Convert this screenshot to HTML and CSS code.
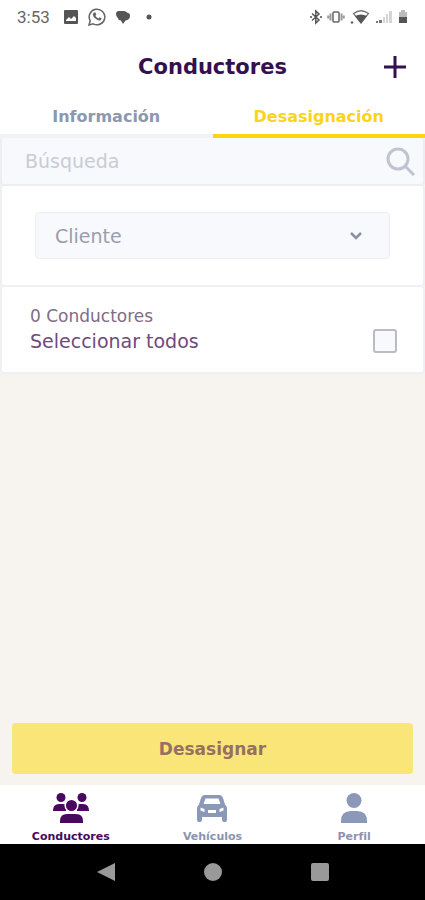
FILE: index.html
```html
<!DOCTYPE html>
<html lang="es">
<head>
<meta charset="utf-8">
<meta name="viewport" content="width=device-width, initial-scale=1">
<title>Conductores</title>
<link rel="stylesheet" href="styles.css">
</head>
<body>
<div class="status">
  <span class="clock">3:53</span>
  <div class="notices">
    <svg width="16" height="16" viewBox="0 0 16 16"><path fill="#555" fill-rule="evenodd" d="M2 1h12a1 1 0 0 1 1 1v12a1 1 0 0 1-1 1H2a1 1 0 0 1-1-1V2a1 1 0 0 1 1-1zM3 12h10V9l-2-2-3 3-2-2-3 3z"/></svg>
    <svg width="18" height="18" viewBox="0 0 18 18"><path fill="none" stroke="#666" stroke-width="1.5" d="M1 17l1.200-4.200A7.800 7.800 0 1 1 5.200 15.800z"/><path fill="#666" d="M6.200 4.500l1.300.1.800 2-.8 1.200c.8 1.400 1.600 2 2.900 2.600l1.100-1.200 2 1c0 1.600-1 2.400-2.200 2.400-3-.4-6.200-3.400-6.400-6 0-.9.600-1.700 1.300-2.100z"/></svg>
    <svg width="16" height="16" viewBox="0 0 16 16"><path fill="#555" d="M4 2h5q2 0 3 1.500 3 .5 3 3Q15 11 10.500 11.500L8 15l-2-3.500Q3 11 2.500 8.500 1 7 1 5q0-3 3-3z"/></svg>
    <svg class="dot" width="6" height="6" viewBox="0 0 6 6"><circle cx="3" cy="3" r="2.500" fill="#555"/></svg>
  </div>
  <div class="signals">
    <svg width="12" height="16" viewBox="0 0 12 16"><path fill="none" stroke="#555" stroke-width="1.500" d="M2 4.500l7 6.500-3.200 3V2L9 5 2 11.500"/><path fill="#777" d="M10 7h2v2h-2zM0 7h2v2H0z"/></svg>
    <svg width="18" height="16" viewBox="0 0 18 16"><rect x="6" y="3" width="6" height="10" rx="1" fill="none" stroke="#666" stroke-width="1.500"/><path stroke="#999" stroke-width="2" d="M3.500 4.500v7M14.500 4.500v7M1.200 6.500v3M16.800 6.500v3"/></svg>
    <svg width="20" height="16" viewBox="0 0 20 16"><circle cx="2" cy="13.500" r="1.300" fill="#666"/><path fill="none" stroke="#777" stroke-width="1.300" d="M11 14L3.500 4.500Q11-1 18.500 4.500z"/><path fill="#555" d="M11 14.500L5 7q6-3 12 0z"/></svg>
    <svg width="18" height="16" viewBox="0 0 18 16"><path fill="#777" d="M1 12h2v2H1zM4 11h3v3H4z"/><path fill="#d5d5d5" d="M8 8h2v6H8zM11 5h2v9h-2zM14 2h3v12h-3z"/></svg>
    <svg width="10" height="16" viewBox="0 0 10 16"><path fill="#bbb" d="M3 1h4v2h2v6H1V3h2z"/><path fill="#555" d="M1 8h8v6H1z"/></svg>
  </div>
</div>
<header class="top">
  <h1>Conductores</h1>
  <button class="add" aria-label="Añadir"><svg width="24" height="24" viewBox="0 0 24 24"><path stroke="#35104f" stroke-width="3" d="M12 1v22M1 12h22"/></svg></button>
</header>
<nav class="tabs">
  <a href="#info">Información</a>
  <a href="#des" class="on">Desasignación</a>
</nav>
<main>
  <form class="search">
    <input type="search" placeholder="Búsqueda" aria-label="Búsqueda">
    <button type="button" aria-label="Buscar"><svg width="30" height="30" viewBox="0 0 30 30"><g fill="none" stroke="#bfc4d0" stroke-width="3"><circle cx="13" cy="13" r="10"/><path d="M20 20l9 9"/></g></svg></button>
  </form>
  <section class="filter">
    <div class="pick">
      <select aria-label="Cliente"><option>Cliente</option></select>
      <svg width="14" height="10" viewBox="0 0 14 10"><path fill="none" stroke="#8b90a2" stroke-width="2.500" d="M2 2l5 5 5-5"/></svg>
    </div>
  </section>
  <section class="all">
    <div>
      <p class="count">0 Conductores</p>
      <label for="all">Seleccionar todos</label>
    </div>
    <input type="checkbox" id="all">
  </section>
</main>
<div class="action"><button>Desasignar</button></div>
<nav class="bottom">
  <a href="#c" class="on"><svg width="38" height="32" viewBox="0 0 38 32"><g fill="#4a0860"><circle cx="9" cy="5.500" r="4.500"/><circle cx="30" cy="5.500" r="4.500"/><path d="M1 19q0-7 6-7h4q3 0 3 3v4zM25 19v-4q0-3 3-3h3q6 0 6 7z"/><path d="M8 31v-2q0-7 7-7h9q7 0 7 7v2z"/><circle cx="19.500" cy="13.500" r="6.300" stroke="#fff" stroke-width="1.500"/></g></svg>Conductores</a>
  <a href="#v"><svg width="38" height="32" viewBox="0 0 38 32"><path fill="#8b98b8" fill-rule="evenodd" d="M12 3h14q3 0 4 3l2 6.500q2 1.500 2 4V28q0 2-2 2h-1q-2 0-2-2v-3H9v3q0 2-2 2H6q-2 0-2-2V16.500q0-2.500 2-4L8 6q1-3 4-3zm.500 3.500L10.500 12h17l-2-5.500zM7.500 15.500v3l4 1.500v-3zM30.500 15.500v3l-4 1.500v-3zM15 18v3h8v-3z"/></svg>Vehículos</a>
  <a href="#p"><svg width="38" height="32" viewBox="0 0 38 32"><g fill="#8b98b8"><circle cx="19" cy="8.500" r="7.500"/><path d="M6 31v-2q0-10 10-10h6q10 0 10 10v2z"/></g></svg>Perfil</a>
</nav>
<div class="system">
  <button aria-label="Atrás"><svg width="20" height="20" viewBox="0 0 20 20"><path fill="#999" d="M19 1v18L1 10z"/></svg></button>
  <button aria-label="Inicio"><svg width="20" height="20" viewBox="0 0 20 20"><circle cx="10" cy="10" r="9" fill="#999"/></svg></button>
  <button aria-label="Recientes"><svg width="20" height="20" viewBox="0 0 20 20"><rect x="1" y="1" width="18" height="18" rx="2" fill="#999"/></svg></button>
</div>
</body>
</html>
```
FILE: styles.css
```css
* { box-sizing: border-box; }
body { margin: 0; min-height: 100vh; display: flex; flex-direction: column; background: #f7f3ef; font-family: "DejaVu Sans", sans-serif; }
h1, p { margin: 0; }
button { border: 0; padding: 0; background: none; font: inherit; }
a { text-decoration: none; }
svg { display: block; }
.status { display: flex; align-items: center; height: 34px; padding: 0 17px; background: #fff; }
.clock { font: 17px Roboto, sans-serif; color: #666; }
.notices, .signals { display: flex; align-items: center; gap: 9px; margin-left: 13px; }
.dot { margin-left: 6px; }
.signals { gap: 5px; margin-left: auto; }
.top { display: grid; grid-template-columns: 1fr auto 1fr; align-items: center; height: 65px; background: #fff; padding: 0 18px; }
.top h1 { grid-column: 2; font-size: 21px; color: #35104f; }
.add { justify-self: end; }
.tabs { display: grid; grid-template-columns: 1fr 1fr; background: #fff; }
.tabs a { height: 39px; padding-top: 8px; line-height: 20px; text-align: center; font-size: 16px; font-weight: bold; color: #8b98b0; border-bottom: 4px solid #f1f2f3; }
.tabs .on { color: #fad41c; border-color: #fcd510; }
.search { display: flex; align-items: center; height: 48px; padding: 0 8px 0 23px; background: #f7f9fd; border: 2px solid #eceef2; border-top: 0; border-radius: 4px; }
.search input { flex: 1; min-width: 0; border: 0; padding: 0; background: none; font: 19px "DejaVu Sans", sans-serif; color: #666; }
.search input::placeholder { color: #c8ccd4; opacity: 1; }
.filter, .all { background: #fff; border: 2px solid #eef0f4; border-top: 0; border-radius: 4px; }
.filter { padding: 26px 33px; }
.pick { position: relative; }
.pick select { appearance: none; width: 100%; height: 47px; padding: 0 19px; border: 1px solid #eceef2; border-radius: 4px; background: #f7f9fd; font: 19px "DejaVu Sans", sans-serif; color: #9a9eac; }
.pick svg { position: absolute; right: 27px; top: 19px; pointer-events: none; }
.all { display: flex; align-items: center; justify-content: space-between; height: 87px; padding: 0 26px 2px 28px; }
.count { font-size: 17px; line-height: 24px; color: #806c88; }
.all label { display: block; font-size: 19px; line-height: 26px; color: #704a7c; }
.all input { appearance: none; width: 24px; height: 24px; margin: 24px 0 0; border: 2px solid #b9bcc1; border-radius: 3px; background: #f7f9fd; }
.action { margin-top: auto; padding: 11px 12px; }
.action button { display: block; width: 100%; height: 51px; border-radius: 4px; background: #fae678; font-size: 17px; font-weight: bold; color: #967060; }
.bottom { display: grid; grid-template-columns: repeat(3, 1fr); height: 59px; background: #fff; }
.bottom a { display: flex; flex-direction: column; align-items: center; padding-top: 7px; font-size: 11px; line-height: 12px; font-weight: bold; color: #8b93b0; }
.bottom svg { margin-bottom: 7px; }
.bottom .on { color: #4a0860; }
.system { display: flex; justify-content: center; align-items: center; gap: 87px; height: 56px; background: #000; }
```
